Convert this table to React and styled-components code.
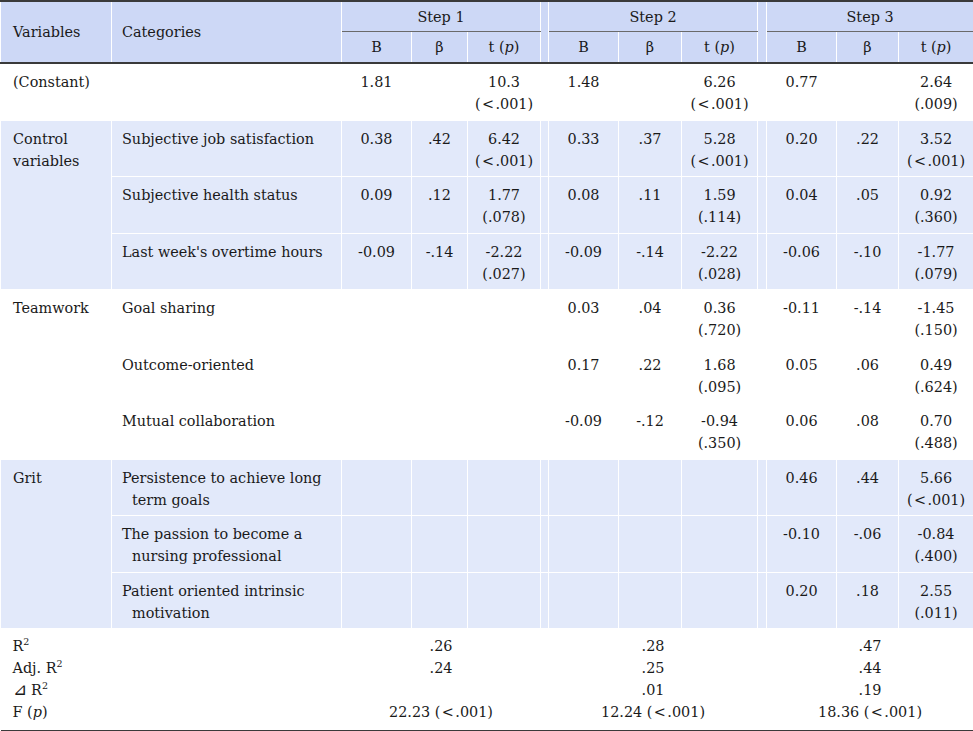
import React from 'react';
import styled, { createGlobalStyle } from 'styled-components';

const GlobalStyle = createGlobalStyle`
  html, body { margin: 0; padding: 0; background: #fff; }
  body {
    font-family: "DejaVu Serif", "Liberation Serif", serif;
    color: #1a1a1a;
  }
`;

const HEAD_BG = '#cdd8f6';
const ROW_BG = '#e2e9fa';
const RULE = '#3a3a3a';

const Table = styled.table`
  width: 973px;
  table-layout: fixed;
  border-collapse: collapse;
  font-size: 14.4px;
  line-height: 22px;
  border-top: 2px solid ${RULE};
  border-bottom: 2px solid ${RULE};
`;

const Head = styled.thead`
  border-bottom: 2px solid ${RULE};
`;

const HeadCell = styled.th`
  background: ${HEAD_BG};
  font-weight: normal;
  text-align: ${(p) => p.$align || 'center'};
  padding: ${(p) => p.$pad || '4px 0 3px'};
  border-left: 1px solid #fff;
  border-right: 1px solid #fff;
  border-top: none;
  border-bottom: ${(p) => (p.$rule ? '1px solid #6a6a6a' : 'none')};
  vertical-align: middle;
  white-space: nowrap;
`;

const Cell = styled.td`
  background: ${(p) => (p.$shade ? ROW_BG : 'transparent')};
  border: 1px solid #fff;
  padding: 7px 0 4.5px;
  vertical-align: top;
  text-align: center;
  white-space: nowrap;
`;

const VarCell = styled(Cell)`
  text-align: left;
  padding-left: 12px;
  padding-right: 8px;
  white-space: normal;
`;

const CatCell = styled(Cell)`
  text-align: left;
  padding-left: 20px;
  padding-right: 10px;
  text-indent: -10px;
  white-space: normal;
`;

const StatCell = styled.td`
  padding: ${(p) => (p.$first ? '6px' : '0')} 0 ${(p) => (p.$last ? '7px' : '0')};
  text-align: ${(p) => (p.$left ? 'left' : 'center')};
  padding-left: ${(p) => (p.$left ? '12px' : '0')};
  border: none;
  white-space: nowrap;
`;

const Line = styled.span`
  display: block;
`;

const Ital = styled.i`
  font-style: italic;
`;

const Sup = styled.sup`
  font-size: 9.5px;
  line-height: 0;
  vertical-align: 6px;
`;

const Delta = styled.span`
  font-size: 17px;
  line-height: 0;
`;

const widths = [111, 230, 70, 56, 73, 8, 70, 63, 76, 9, 70, 62, 75];

const LT = '(\u200A<\u200A.001)';
const P = LT;

const groups = [
  {
    name: '(Constant)',
    shade: false,
    rows: [
      { cat: '', s: [['1.81', '', '10.3', P], ['1.48', '', '6.26', P], ['0.77', '', '2.64', '(.009)']] },
    ],
  },
  {
    name: 'Control variables',
    shade: true,
    rows: [
      { cat: 'Subjective job satisfaction', s: [['0.38', '.42', '6.42', P], ['0.33', '.37', '5.28', P], ['0.20', '.22', '3.52', P]] },
      { cat: 'Subjective health status', s: [['0.09', '.12', '1.77', '(.078)'], ['0.08', '.11', '1.59', '(.114)'], ['0.04', '.05', '0.92', '(.360)']] },
      { cat: "Last week's overtime hours", s: [['-0.09', '-.14', '-2.22', '(.027)'], ['-0.09', '-.14', '-2.22', '(.028)'], ['-0.06', '-.10', '-1.77', '(.079)']] },
    ],
  },
  {
    name: 'Teamwork',
    shade: false,
    rows: [
      { cat: 'Goal sharing', s: [null, ['0.03', '.04', '0.36', '(.720)'], ['-0.11', '-.14', '-1.45', '(.150)']] },
      { cat: 'Outcome-oriented', s: [null, ['0.17', '.22', '1.68', '(.095)'], ['0.05', '.06', '0.49', '(.624)']] },
      { cat: 'Mutual collaboration', s: [null, ['-0.09', '-.12', '-0.94', '(.350)'], ['0.06', '.08', '0.70', '(.488)']] },
    ],
  },
  {
    name: 'Grit',
    shade: true,
    rows: [
      { cat: 'Persistence to achieve long term goals', s: [null, null, ['0.46', '.44', '5.66', P]] },
      { cat: 'The passion to become a nursing professional', s: [null, null, ['-0.10', '-.06', '-0.84', '(.400)']] },
      { cat: 'Patient oriented intrinsic motivation', s: [null, null, ['0.20', '.18', '2.55', '(.011)']] },
    ],
  },
];

const stats = [
  { label: <>R<Sup>2</Sup></>, v: ['.26', '.28', '.47'] },
  { label: <>Adj. R<Sup>2</Sup></>, v: ['.24', '.25', '.44'] },
  { label: <><Delta>⊿</Delta> R<Sup>2</Sup></>, v: ['', '.01', '.19'] },
  { label: <>F (<Ital>p</Ital>)</>, v: [`22.23 ${LT}`, `12.24 ${LT}`, `18.36 ${LT}`] },
];

function StepCells({ data, shade }) {
  const [b, beta, t, p] = data || ['', '', '', ''];
  return (
    <>
      <Cell $shade={shade}>{b}</Cell>
      <Cell $shade={shade}>{beta}</Cell>
      <Cell $shade={shade}>
        {t && <Line>{t}</Line>}
        {p && <Line>{p}</Line>}
      </Cell>
    </>
  );
}

export default function App() {
  return (
    <>
      <GlobalStyle />
      <Table>
        <colgroup>
          {widths.map((w, i) => (
            <col key={i} style={{ width: w }} />
          ))}
        </colgroup>
        <Head>
          <tr>
            <HeadCell rowSpan={2} $align="left" $pad="0 0 0 12px">Variables</HeadCell>
            <HeadCell rowSpan={2} $align="left" $pad="0 0 0 10px">Categories</HeadCell>
            <HeadCell colSpan={3} $rule>Step 1</HeadCell>
            <HeadCell rowSpan={2} />
            <HeadCell colSpan={3} $rule>Step 2</HeadCell>
            <HeadCell rowSpan={2} />
            <HeadCell colSpan={3} $rule>Step 3</HeadCell>
          </tr>
          <tr>
            {[0, 1, 2].map((k) => (
              <React.Fragment key={k}>
                <HeadCell $pad="4px 0 4px">B</HeadCell>
                <HeadCell $pad="4px 0 4px">β</HeadCell>
                <HeadCell $pad="4px 0 4px">t (<Ital>p</Ital>)</HeadCell>
              </React.Fragment>
            ))}
          </tr>
        </Head>
        <tbody>
          {groups.map((g) =>
            g.rows.map((r, ri) => (
              <tr key={g.name + ri}>
                {ri === 0 && (
                  <VarCell rowSpan={g.rows.length} $shade={g.shade}>
                    {g.name}
                  </VarCell>
                )}
                <CatCell $shade={g.shade}>{r.cat}</CatCell>
                <StepCells data={r.s[0]} shade={g.shade} />
                <Cell $shade={g.shade} />
                <StepCells data={r.s[1]} shade={g.shade} />
                <Cell $shade={g.shade} />
                <StepCells data={r.s[2]} shade={g.shade} />
              </tr>
            ))
          )}
          {stats.map((s, i) => {
            const first = i === 0;
            const last = i === stats.length - 1;
            return (
              <tr key={i}>
                <StatCell colSpan={2} $left $first={first} $last={last}>
                  {s.label}
                </StatCell>
                <StatCell colSpan={3} $first={first} $last={last}>{s.v[0]}</StatCell>
                <StatCell $first={first} $last={last} />
                <StatCell colSpan={3} $first={first} $last={last}>{s.v[1]}</StatCell>
                <StatCell $first={first} $last={last} />
                <StatCell colSpan={3} $first={first} $last={last}>{s.v[2]}</StatCell>
              </tr>
            );
          })}
        </tbody>
      </Table>
    </>
  );
}
